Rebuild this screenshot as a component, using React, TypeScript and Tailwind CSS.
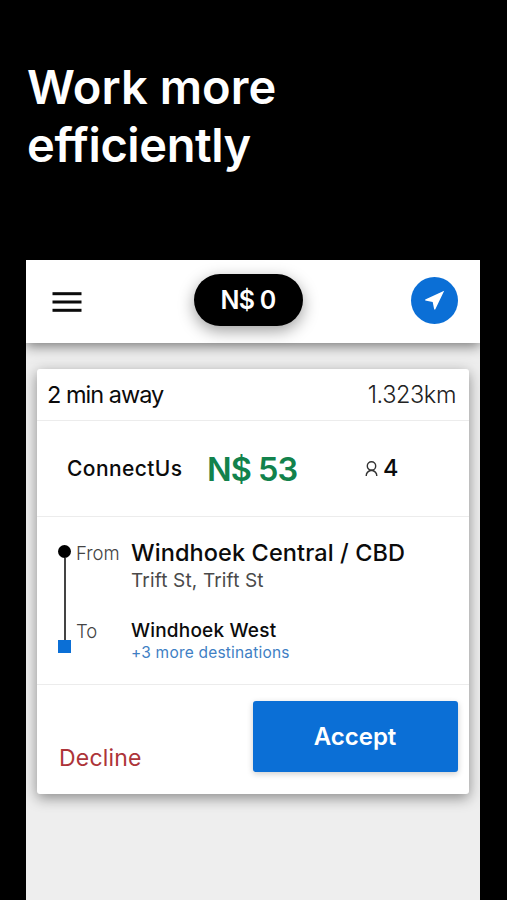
import React from 'react';

function MenuIcon() {
  return (
    <svg width="30" height="22" viewBox="0 0 30 22" fill="#0b0b0b">
      <rect x="0.5" y="1.2" width="29" height="3" />
      <rect x="0.5" y="9.5" width="29" height="3" />
      <rect x="0.5" y="17.8" width="29" height="3" />
    </svg>
  );
}

function LocationIcon() {
  return (
    <svg width="20" height="20" viewBox="0 0 20 20" fill="white">
      <path d="M19.2 0.8L10.2 19.6H9.2L7.7 12L0.2 10.6V9.4Z" />
    </svg>
  );
}

function RiderIcon() {
  return (
    <svg
      width="13"
      height="16"
      viewBox="0 0 13 16"
      fill="none"
      stroke="#333333"
      strokeWidth="1.4"
    >
      <ellipse cx="6.5" cy="5" rx="4.2" ry="4.3" />
      <path d="M1.2 15C1.2 12.2 3 10 6.5 9.3C10 10 11.8 12.2 11.8 15" />
    </svg>
  );
}

function Header() {
  return (
    <header className="relative z-10 flex h-[83px] items-center bg-white pb-[3px] pl-[26px] pr-[22px] shadow-[0_3px_12px_rgba(0,0,0,0.5)]">
      <button className="mt-[3px]">
        <MenuIcon />
      </button>
      <div className="ml-[112px] flex h-[52px] w-[109px] items-center justify-center rounded-full bg-black pr-px pt-px text-[25px] font-semibold tracking-[-0.8px] text-white shadow-[0_5px_16px_rgba(0,0,0,0.38)]">
        N$ 0
      </div>
      <button className="ml-auto flex size-[47px] items-center justify-center rounded-full bg-[#0b6fd6]">
        <LocationIcon />
      </button>
    </header>
  );
}

function Route() {
  return (
    <div className="flex h-[168px] border-b border-[#ececec] pl-[21px]">
      {/* pickup dot, line and drop-off square */}
      <div className="flex w-[13px] flex-col items-center pt-[28px]">
        <div className="size-[13px] rounded-full bg-black" />
        <div className="h-[82px] w-[2px] bg-[#444444]" />
        <div className="size-[13px] bg-[#0b6fd6]" />
      </div>
      <div className="w-[60px] pl-[5px] text-[18.5px] font-light leading-[24px] text-[#444444]">
        <div className="mt-[24px]">From</div>
        <div className="mt-[54px]">To</div>
      </div>
      <div className="whitespace-nowrap pt-[21px]">
        <div className="text-[23.5px] font-medium leading-[30px] tracking-[0.1px] text-[#0b0b0b]">
          Windhoek Central / CBD
        </div>
        <div className="pt-px text-[19px] leading-[24px] tracking-[0.15px] text-[#4a4a4a]">
          Trift St, Trift St
        </div>
        <div className="mt-[26px] text-[19px] font-medium leading-[24px] tracking-[0.2px] text-[#0b0b0b]">
          Windhoek West
        </div>
        <div className="text-[15.5px] leading-[19px] tracking-[0.2px] text-[#3f7fc4]">
          +3 more destinations
        </div>
      </div>
    </div>
  );
}

function TripCard() {
  return (
    <div className="mx-[11px] mt-[26px] h-[425px] rounded-[3px] bg-white shadow-[0_4px_14px_rgba(0,0,0,0.42)]">
      <div className="flex h-[52px] items-center justify-between border-b border-[#ececec] pl-[10px] pr-[13px] text-[23.5px]">
        <span className="tracking-[-1px] text-[#0b0b0b]">2 min away</span>
        <span className="font-light tracking-[-0.4px] text-[#222222]">1.323km</span>
      </div>
      <div className="flex h-[96px] items-center border-b border-[#ececec] pl-[30px]">
        <span className="w-[140px] pt-px text-[21px] font-medium tracking-[0.4px] text-[#0b0b0b]">
          ConnectUs
        </span>
        <span className="w-[158px] pt-[3px] text-[32.5px] font-semibold tracking-[-1px] text-[#12824c]">
          N$ 53
        </span>
        <RiderIcon />
        <span className="ml-[5px] pb-px text-[23.5px] font-medium text-[#0b0b0b]">4</span>
      </div>
      <Route />
      <div className="flex justify-between pl-[22px] pr-[11px] pt-[16px]">
        <button className="mb-[-4px] h-[35px] self-end text-[23px] tracking-[0.2px] text-[#ad3439]">
          Decline
        </button>
        <button className="h-[71px] w-[205px] rounded-[3px] bg-[#0b6fd6] pr-px text-[24px] font-semibold text-white shadow-[0_2px_6px_rgba(0,0,0,0.2)]">
          Accept
        </button>
      </div>
    </div>
  );
}

export default function App() {
  return (
    <div className="flex h-[900px] w-[507px] flex-col overflow-hidden bg-black pl-[26px] pr-[27px] font-['Inter','Liberation_Sans',sans-serif]">
      <h1 className="h-[260px] shrink-0 pl-px pt-[58px] text-[47px] font-semibold leading-[58px] text-white">
        <span className="block tracking-[0.1px]">Work more</span>
        <span className="block tracking-[-0.4px]">efficiently</span>
      </h1>
      <div className="flex-1 overflow-hidden bg-[#eeeeee]">
        <Header />
        <TripCard />
      </div>
    </div>
  );
}
